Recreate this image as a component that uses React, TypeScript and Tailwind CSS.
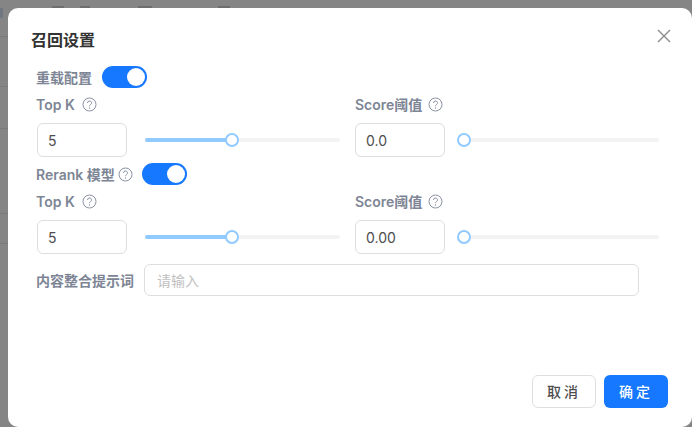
const font = "font-['Inter','Noto_Sans_CJK_SC',sans-serif]";

function Help() {
  return (
    <svg width="15" height="15" viewBox="0 0 15 15" fill="none" className="shrink-0 text-[#8a92a3]">
      <circle cx="7.5" cy="7.5" r="6.5" stroke="currentColor" strokeWidth="1" />
      <path d="M5.5 6a2 2 0 1 1 3 1.7c-.7.4-1 .8-1 1.5" stroke="currentColor" strokeWidth="1" />
      <circle cx="7.5" cy="11" r=".7" fill="currentColor" />
    </svg>
  );
}

function Toggle() {
  return (
    <div className="flex h-[22px] w-[45px] items-center justify-end rounded-full bg-[#1677ff] pr-[2px]">
      <div className="h-[18px] w-[18px] rounded-full bg-white" />
    </div>
  );
}

function Slider({ pct, wide }: { pct: number; wide?: boolean }) {
  return (
    <div className={wide ? "relative ml-[18px] h-[4px] w-[195px] rounded-full bg-[#f3f3f3]" : "relative ml-[19px] h-[4px] w-[195px] rounded-full bg-[#f3f3f3]"}>
      <div className="h-full rounded-full bg-[#91caff]" style={{ width: `${pct}%` }} />
      <div
        className="absolute top-1/2 h-[14px] w-[14px] -translate-x-1/2 -translate-y-1/2 rounded-full border-2 border-[#91caff] bg-white"
        style={{ left: `${pct}%` }}
      />
    </div>
  );
}

function Field({ label, value, pct, wide }: { label: string; value: string; pct: number; wide?: boolean }) {
  return (
    <div className={wide ? "w-[318px]" : "w-[304px]"}>
      <div className={wide ? "-ml-px flex h-[22px] items-center gap-[7px] text-[14px] font-semibold text-[#7d8595]" : "flex h-[22px] items-center gap-[6px] text-[14px] font-semibold text-[#7d8595]"}>
        <span>{label}</span>
        <Help />
      </div>
      <div className="mt-[8px] flex items-center">
        <div className="flex h-[34px] w-[90px] shrink-0 items-center rounded-[6px] border border-[#dedede] bg-white px-[10px] text-[14px] text-[#4d4d4d]">
          {value}
        </div>
        <Slider pct={pct} wide={wide} />
      </div>
    </div>
  );
}

function Row({ first, second }: { first: string; second: string }) {
  return (
    <div className="ml-[1px] flex">
      <Field label="Top K" value={first} pct={44.6} wide />
      <Field label="Score阈值" value={second} pct={0} />
    </div>
  );
}

export default function App() {
  return (
    <div className={`relative h-[427px] w-[692px] overflow-hidden bg-[#858585] pl-[8px] pt-[8px] ${font}`}>
      {/* bottoms of the dimmed page's header glyphs, barely visible above the dialog */}
      <div className="absolute left-[52px] top-[6px] h-[2px] w-[12px] bg-[#6e6e6e]" />
      <div className="absolute left-[80px] top-[6px] h-[2px] w-[10px] bg-[#6e6e6e]" />
      <div className="absolute left-[138px] top-[6px] h-[2px] w-[14px] bg-[#6e6e6e]" />
      <div className="absolute left-[218px] top-[6px] h-[2px] w-[12px] bg-[#6e6e6e]" />
      <div className="absolute left-[0px] top-[8px] h-[10px] w-[3px] bg-[#6f7680]" />
      <div className="absolute inset-x-0 top-[36px] h-px bg-[#7b7b7b]" />
      <div className="absolute inset-x-0 top-[86px] h-px bg-[#7b7b7b]" />
      <div className="absolute inset-x-0 top-[128px] h-px bg-[#7b7b7b]" />
      <div className="absolute inset-x-0 top-[213px] h-px bg-[#7b7b7b]" />
      <div className="absolute inset-x-0 top-[243px] h-px bg-[#7b7b7b]" />
      <div className="relative flex h-[419px] w-[684px] flex-col rounded-[10px] bg-white pl-[23px] pt-[20px]">
        <div className="text-[16px] font-semibold leading-[24px] text-[#333333]">召回设置</div>
        <svg width="14" height="14" viewBox="0 0 14 14" className="absolute right-[21px] top-[21px] text-[#8c8c8c]" fill="none">
          <path d="M1 1l12 12M13 1L1 13" stroke="currentColor" strokeWidth="1.4" />
        </svg>

        <div className="mt-[14px] pl-[5px]">
          <div className="flex h-[22px] items-center gap-[10px] text-[14px] font-semibold text-[#7d8595]">
            <span>重载配置</span>
            <Toggle />
          </div>
          <div className="mt-[5px]">
            <Row first="5" second="0.0" />
          </div>
          <div className="mt-[6px] flex h-[22px] items-center gap-[3px] text-[14px] font-semibold text-[#7d8595]">
            <span>Rerank 模型</span>
            <Help />
            <span className="ml-[6px]"><Toggle /></span>
          </div>
          <div className="mt-[5px]">
            <Row first="5" second="0.00" />
          </div>
          <div className="mt-[10px] flex items-center gap-[10px]">
            <span className="text-[14px] font-semibold text-[#7d8595]">内容整合提示词</span>
            <div className="flex h-[32px] w-[495px] items-center rounded-[6px] border border-[#dedede] bg-white px-[12px] text-[14px] text-[#bfbfbf]">
              请输入
            </div>
          </div>
        </div>

        <div className="absolute bottom-[19px] right-[24px] flex gap-[8px]">
          <button className="h-[33px] w-[64px] rounded-[6px] border border-[#dedede] bg-white text-[14px] font-medium tracking-[3px] text-[#4d4d4d]">取消</button>
          <button className="h-[33px] w-[64px] rounded-[6px] bg-[#1677ff] text-[14px] font-medium tracking-[3px] text-white">确定</button>
        </div>
      </div>
    </div>
  );
}
